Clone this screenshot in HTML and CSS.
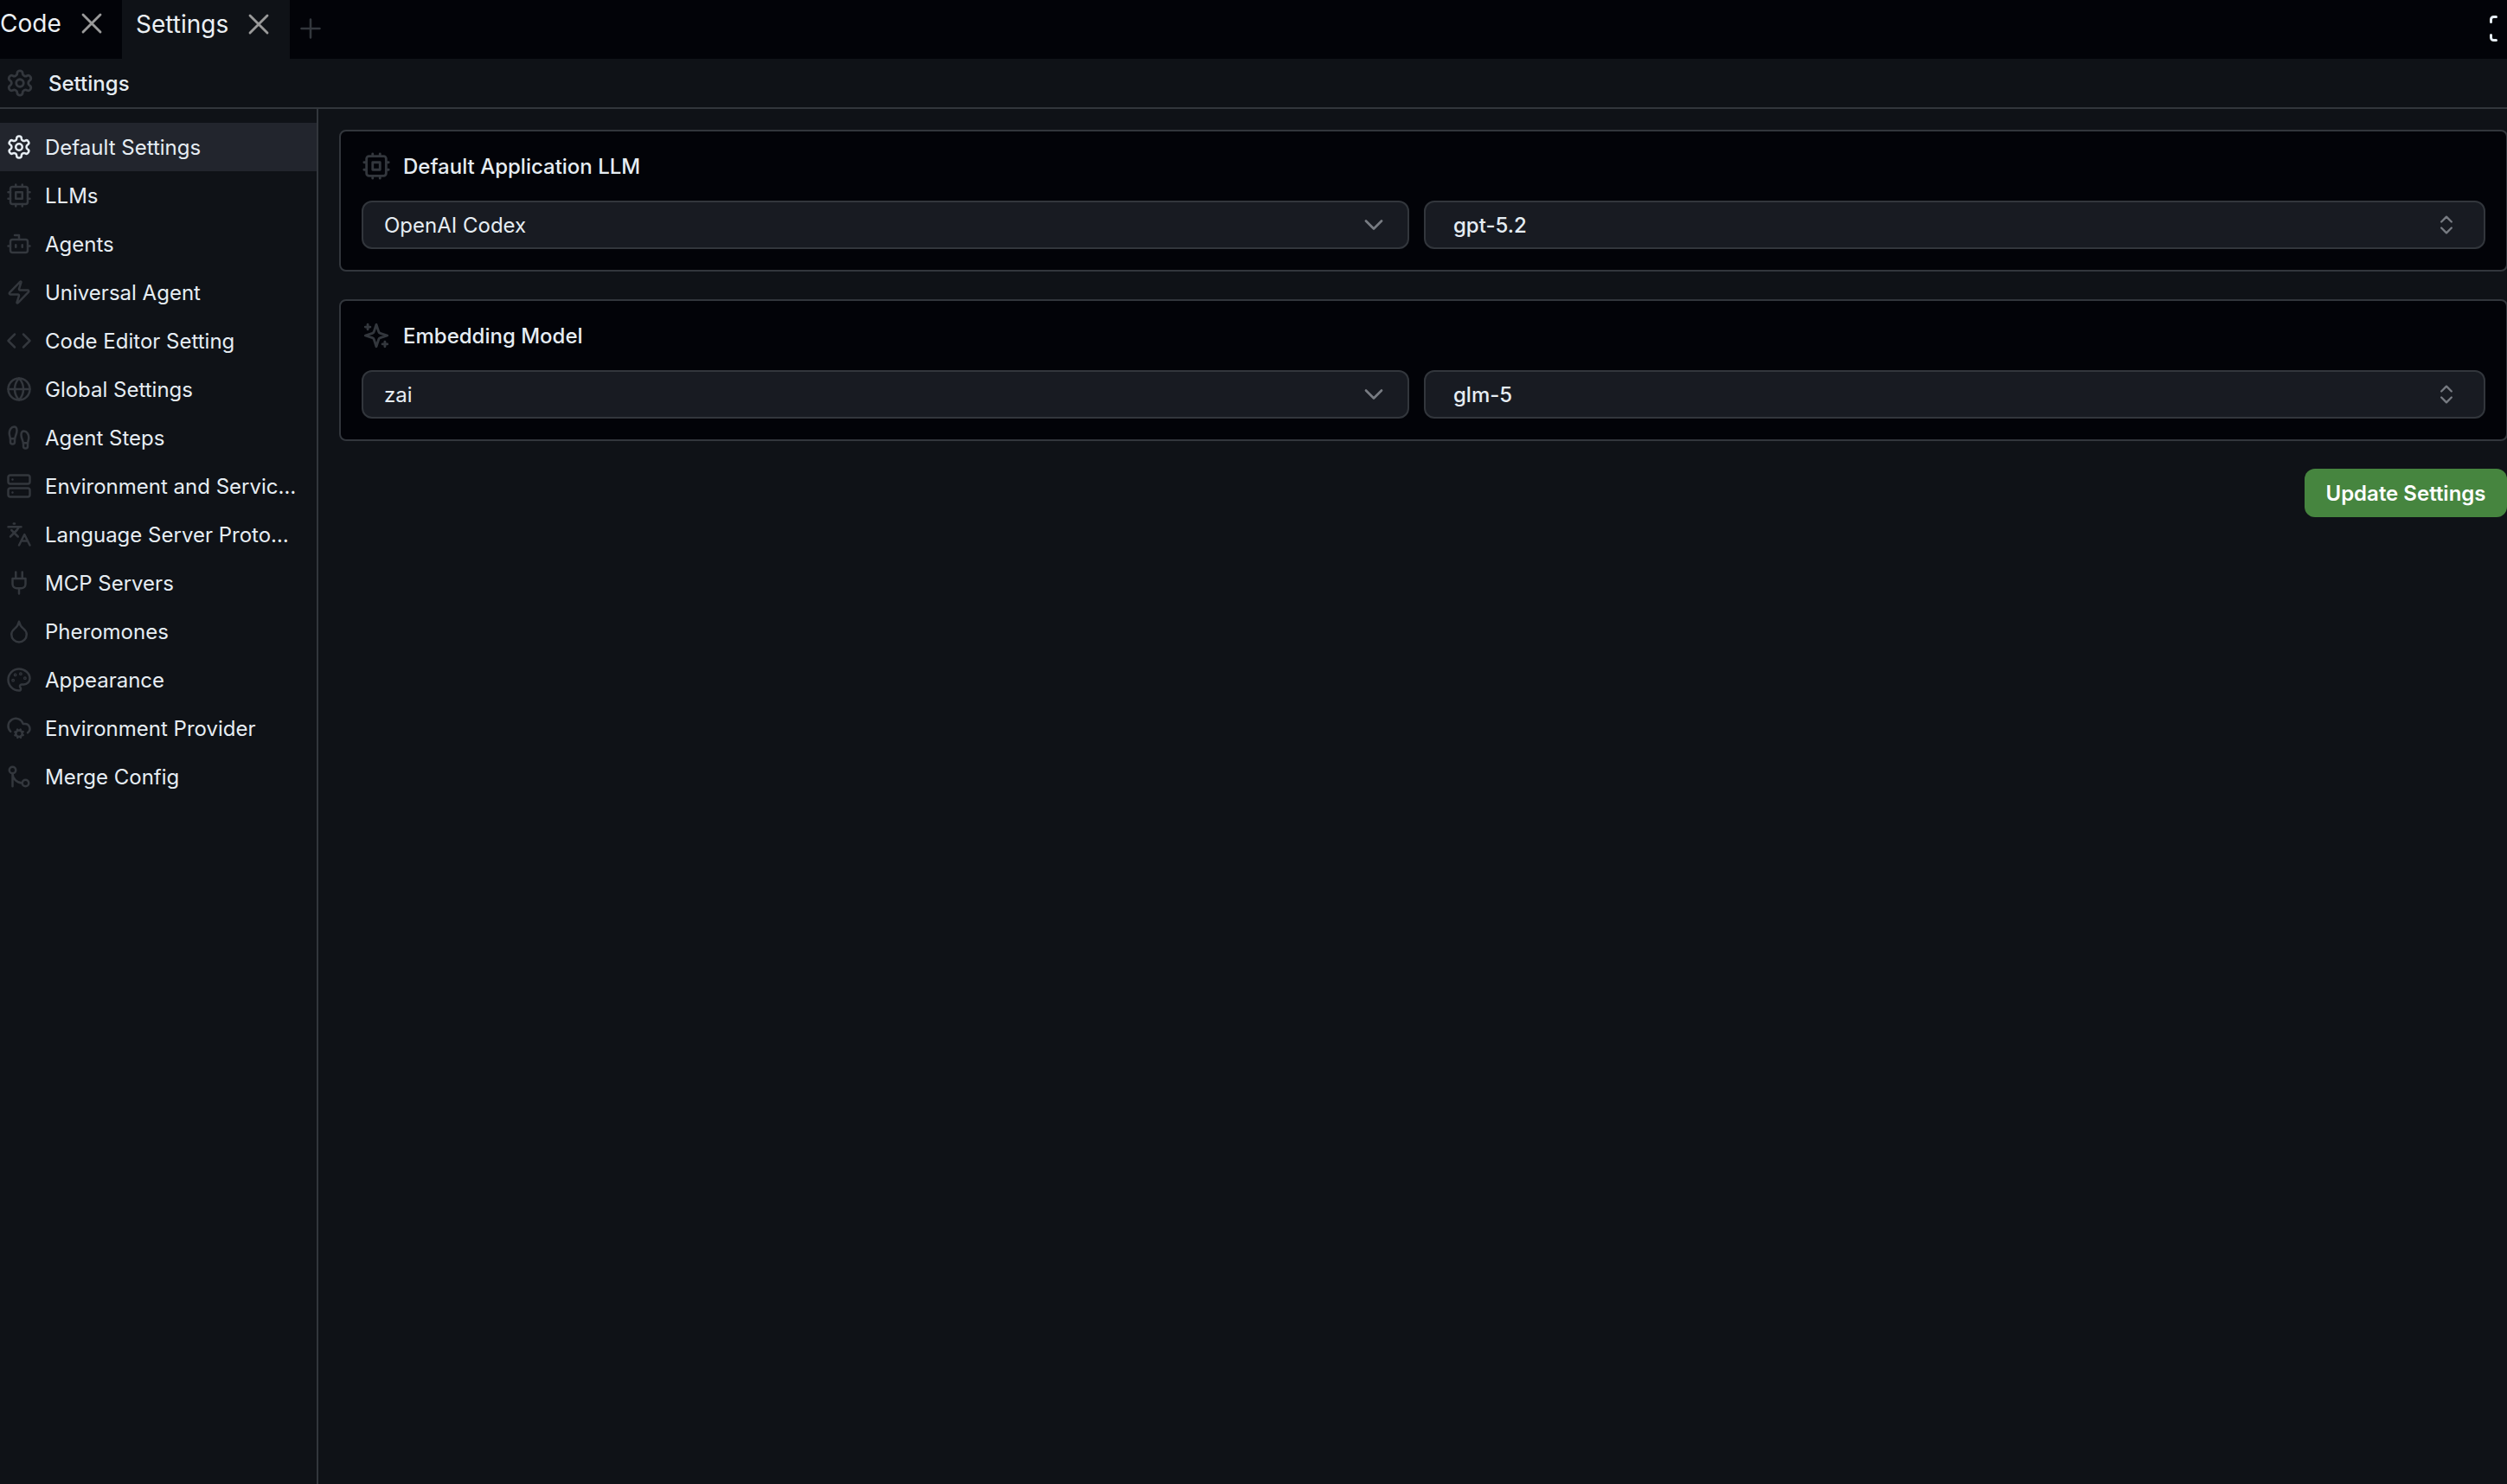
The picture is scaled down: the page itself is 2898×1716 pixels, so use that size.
FILE: index.html
```html
<!DOCTYPE html>
<html lang="en">
<head>
    <meta charset="UTF-8">
    <meta name="viewport" content="width=device-width, initial-scale=1.0">
    <title>Settings</title>
    <link rel="stylesheet" href="styles.css">
</head>
<body>
    <svg class="sprite" xmlns="http://www.w3.org/2000/svg">
        <symbol id="i-settings" viewBox="0 0 24 24"><path d="M12.22 2h-.44a2 2 0 0 0-2 2v.18a2 2 0 0 1-1 1.73l-.43.25a2 2 0 0 1-2 0l-.15-.08a2 2 0 0 0-2.73.73l-.22.38a2 2 0 0 0 .73 2.73l.15.1a2 2 0 0 1 1 1.72v.51a2 2 0 0 1-1 1.74l-.15.09a2 2 0 0 0-.73 2.73l.22.38a2 2 0 0 0 2.73.73l.15-.08a2 2 0 0 1 2 0l.43.25a2 2 0 0 1 1 1.73V20a2 2 0 0 0 2 2h.44a2 2 0 0 0 2-2v-.18a2 2 0 0 1 1-1.73l.43-.25a2 2 0 0 1 2 0l.15.08a2 2 0 0 0 2.73-.73l.22-.39a2 2 0 0 0-.73-2.73l-.15-.08a2 2 0 0 1-1-1.74v-.5a2 2 0 0 1 1-1.74l.15-.09a2 2 0 0 0 .73-2.73l-.22-.38a2 2 0 0 0-2.73-.73l-.15.08a2 2 0 0 1-2 0l-.43-.25a2 2 0 0 1-1-1.73V4a2 2 0 0 0-2-2z"/><circle cx="12" cy="12" r="3"/></symbol>
        <symbol id="i-cpu" viewBox="0 0 24 24"><rect x="4" y="4" width="16" height="16" rx="2"/><rect x="9" y="9" width="6" height="6"/><path d="M15 2v2M15 20v2M2 15h2M2 9h2M20 15h2M20 9h2M9 2v2M9 20v2"/></symbol>
        <symbol id="i-bot" viewBox="0 0 24 24"><path d="M12 8V4H8"/><rect x="4" y="8" width="16" height="12" rx="2"/><path d="M2 14h2M20 14h2M15 13v2M9 13v2"/></symbol>
        <symbol id="i-zap" viewBox="0 0 24 24"><path d="M4 14a1 1 0 0 1-.78-1.63l9.9-10.2a.5.5 0 0 1 .86.46l-1.92 6.02A1 1 0 0 0 13 10h7a1 1 0 0 1 .78 1.63l-9.9 10.2a.5.5 0 0 1-.86-.46l1.92-6.02A1 1 0 0 0 11 14z"/></symbol>
        <symbol id="i-code" viewBox="0 0 24 24"><path d="m16 18 6-6-6-6M8 6l-6 6 6 6"/></symbol>
        <symbol id="i-globe" viewBox="0 0 24 24"><circle cx="12" cy="12" r="10"/><path d="M12 2a14.5 14.5 0 0 0 0 20 14.5 14.5 0 0 0 0-20M2 12h20"/></symbol>
        <symbol id="i-steps" viewBox="0 0 24 24"><path d="M4 16v-2.38C4 11.5 2.97 10.5 3 8c.03-2.72 1.49-6 4.5-6C9.37 2 10 3.8 10 5.5c0 3.11-2 5.66-2 8.68V16a2 2 0 1 1-4 0Z"/><path d="M20 20v-2.38c0-2.12 1.03-3.12 1-5.62-.03-2.72-1.49-6-4.5-6C14.63 6 14 7.8 14 9.5c0 3.11 2 5.66 2 8.68V20a2 2 0 1 0 4 0Z"/><path d="M16 17h4M4 13h4"/></symbol>
        <symbol id="i-server" viewBox="0 0 24 24"><rect x="2" y="2" width="20" height="8" rx="2"/><rect x="2" y="14" width="20" height="8" rx="2"/><path d="M6 6h.01M6 18h.01"/></symbol>
        <symbol id="i-languages" viewBox="0 0 24 24"><path d="m5 8 6 6M4 14l6-6 2-3M2 5h12M7 2h1M22 22l-5-10-5 10M14 18h6"/></symbol>
        <symbol id="i-plug" viewBox="0 0 24 24"><path d="M12 22v-5M9 8V2M15 8V2M18 8v5a4 4 0 0 1-4 4h-4a4 4 0 0 1-4-4V8Z"/></symbol>
        <symbol id="i-droplet" viewBox="0 0 24 24"><path d="M12 22a7 7 0 0 0 7-7c0-2-1-3.9-3-5.5s-3.5-4-4-6.5c-.5 2.5-2 4.9-4 6.5C6 11.1 5 13 5 15a7 7 0 0 0 7 7z"/></symbol>
        <symbol id="i-palette" viewBox="0 0 24 24"><circle cx="13.5" cy="6.5" r=".5"/><circle cx="17.5" cy="10.5" r=".5"/><circle cx="8.5" cy="7.5" r=".5"/><circle cx="6.5" cy="12.5" r=".5"/><path d="M12 2C6.5 2 2 6.5 2 12s4.5 10 10 10c.926 0 1.648-.746 1.648-1.688 0-.437-.18-.835-.437-1.125-.29-.289-.438-.652-.438-1.125a1.64 1.64 0 0 1 1.668-1.668h1.996c3.051 0 5.555-2.503 5.555-5.554C21.965 6.012 17.461 2 12 2z"/></symbol>
        <symbol id="i-cloud-cog" viewBox="0 0 24 24"><circle cx="12" cy="17" r="3"/><path d="M4.2 15.1A7 7 0 1 1 15.71 8h1.79a4.5 4.5 0 0 1 2.5 8.2M15.7 18.4l-.9-.3M9.2 15.9l-.9-.3M10.6 20.7l.3-.9M13.1 14.2l.3-.9M13.6 20.7l-.4-1M10.8 14.3l-.4-1M8.3 18.6l1-.4M14.7 15.7l1-.4"/></symbol>
        <symbol id="i-merge" viewBox="0 0 24 24"><circle cx="18" cy="18" r="3"/><circle cx="6" cy="6" r="3"/><path d="M6 21V9a9 9 0 0 0 9 9"/></symbol>
        <symbol id="i-sparkles" viewBox="0 0 24 24"><path d="m12 3-1.9 5.8a2 2 0 0 1-1.3 1.3L3 12l5.8 1.9a2 2 0 0 1 1.3 1.3L12 21l1.9-5.8a2 2 0 0 1 1.3-1.3L21 12l-5.8-1.9a2 2 0 0 1-1.3-1.3L12 3Z"/><path d="M5 3v4M3 5h4M19 17v4M17 19h4"/></symbol>
        <symbol id="i-x" viewBox="0 0 24 24"><path d="M18 6 6 18M6 6l12 12"/></symbol>
        <symbol id="i-plus" viewBox="0 0 24 24"><path d="M5 12h14M12 5v14"/></symbol>
        <symbol id="i-down" viewBox="0 0 24 24"><path d="m6 9 6 6 6-6"/></symbol>
        <symbol id="i-updown" viewBox="0 0 24 24"><path d="m7 15 5 5 5-5M7 9l5-5 5 5"/></symbol>
        <symbol id="i-max" viewBox="0 0 24 24"><path d="M3 7V5a2 2 0 0 1 2-2h2M17 3h2a2 2 0 0 1 2 2v2M21 17v2a2 2 0 0 1-2 2h-2M7 21H5a2 2 0 0 1-2-2v-2"/></symbol>
    </svg>

    <div class="app">
        <div class="tabbar">
            <div class="tab tab-code">
                <span>Code</span>
                <svg class="icon icon-close"><use href="#i-x"/></svg>
            </div>
            <div class="tab tab-active">
                <span>Settings</span>
                <svg class="icon icon-close"><use href="#i-x"/></svg>
            </div>
            <svg class="icon icon-add"><use href="#i-plus"/></svg>
            <svg class="icon icon-max"><use href="#i-max"/></svg>
        </div>

        <div class="page-header">
            <svg class="icon icon-header"><use href="#i-settings"/></svg>
            <span>Settings</span>
        </div>

        <div class="layout">
            <nav class="sidebar">
                <a class="nav-item active"><svg class="icon"><use href="#i-settings"/></svg><span>Default Settings</span></a>
                <a class="nav-item"><svg class="icon"><use href="#i-cpu"/></svg><span>LLMs</span></a>
                <a class="nav-item"><svg class="icon"><use href="#i-bot"/></svg><span>Agents</span></a>
                <a class="nav-item"><svg class="icon"><use href="#i-zap"/></svg><span>Universal Agent</span></a>
                <a class="nav-item"><svg class="icon"><use href="#i-code"/></svg><span>Code Editor Setting</span></a>
                <a class="nav-item"><svg class="icon"><use href="#i-globe"/></svg><span>Global Settings</span></a>
                <a class="nav-item"><svg class="icon"><use href="#i-steps"/></svg><span>Agent Steps</span></a>
                <a class="nav-item"><svg class="icon"><use href="#i-server"/></svg><span>Environment and Servic…</span></a>
                <a class="nav-item"><svg class="icon"><use href="#i-languages"/></svg><span>Language Server Proto…</span></a>
                <a class="nav-item"><svg class="icon"><use href="#i-plug"/></svg><span>MCP Servers</span></a>
                <a class="nav-item"><svg class="icon"><use href="#i-droplet"/></svg><span>Pheromones</span></a>
                <a class="nav-item"><svg class="icon"><use href="#i-palette"/></svg><span>Appearance</span></a>
                <a class="nav-item"><svg class="icon"><use href="#i-cloud-cog"/></svg><span>Environment Provider</span></a>
                <a class="nav-item"><svg class="icon"><use href="#i-merge"/></svg><span>Merge Config</span></a>
            </nav>

            <main class="content">
                <section class="card">
                    <h2 class="card-title"><svg class="icon icon-card"><use href="#i-cpu"/></svg>Default Application LLM</h2>
                    <div class="select-row">
                        <div class="select select-provider"><span>OpenAI Codex</span><svg class="icon icon-chevron"><use href="#i-down"/></svg></div>
                        <div class="select select-model"><span>gpt-5.2</span><svg class="icon icon-updown"><use href="#i-updown"/></svg></div>
                    </div>
                </section>

                <section class="card">
                    <h2 class="card-title"><svg class="icon icon-card"><use href="#i-sparkles"/></svg>Embedding Model</h2>
                    <div class="select-row">
                        <div class="select select-provider"><span>zai</span><svg class="icon icon-chevron"><use href="#i-down"/></svg></div>
                        <div class="select select-model"><span>glm-5</span><svg class="icon icon-updown"><use href="#i-updown"/></svg></div>
                    </div>
                </section>

                <div class="actions">
                    <button class="btn-update">Update Settings</button>
                </div>
            </main>
        </div>
    </div>
</body>
</html>
```

FILE: styles.css
```css
* {
    box-sizing: border-box;
}

html,
body {
    margin: 0;
    height: 100%;
    overflow: hidden;
}

body {
    font-family: Inter, "Noto Sans", sans-serif;
    font-size: 24px;
    color: #e6edf3;
    background-color: #0f1217;
}

.sprite {
    display: none;
}

.icon {
    flex: none;
    width: 30px;
    height: 30px;
    fill: none;
    stroke: #33373d;
    stroke-width: 2;
    stroke-linecap: round;
    stroke-linejoin: round;
}

.app {
    display: flex;
    flex-direction: column;
    height: 100%;
}

/* tabs */
.tabbar {
    display: flex;
    align-items: stretch;
    flex: none;
    height: 68px;
    background-color: #020308;
}

.tab {
    display: flex;
    align-items: center;
    font-size: 28px;
    color: #ecf0f4;
}

.tab-code {
    width: 141px;
    padding-bottom: 15px;
}

.tab-code .icon-close {
    margin-left: 15px;
}

.tab-active {
    width: 194px;
    padding-left: 16px;
    padding-bottom: 12px;
    background-color: #0f1217;
}

.tab-active .icon-close {
    margin-left: 15px;
}

.icon-close {
    width: 40px;
    height: 40px;
    stroke: #9a9a9a;
    stroke-width: 1.7;
}

.icon-add {
    align-self: center;
    width: 36px;
    height: 36px;
    margin: 0 0 2px 6px;
    stroke-width: 1.7;
}

.icon-max {
    align-self: center;
    width: 36px;
    height: 36px;
    margin-left: auto;
    margin-right: -13px;
    margin-bottom: 2px;
    stroke: #e6edf3;
    stroke-width: 2;
}

/* page header */
.page-header {
    display: flex;
    align-items: center;
    flex: none;
    gap: 16px;
    height: 58px;
    padding-left: 6px;
    font-weight: 500;
    border-bottom: 2px solid #32363c;
}

.icon-header {
    width: 34px;
    height: 34px;
}

.layout {
    display: flex;
    flex: 1;
    min-height: 0;
}

/* sidebar */
.sidebar {
    flex: none;
    width: 368px;
    padding-top: 16px;
    border-right: 2px solid #32363c;
}

.nav-item {
    display: flex;
    align-items: center;
    gap: 15px;
    height: 56px;
    padding-left: 7px;
    white-space: nowrap;
}

.nav-item.active {
    background-color: #22252d;
}

.nav-item.active .icon {
    stroke: #e6edf3;
}

/* cards */
.content {
    flex: 1;
    display: flex;
    flex-direction: column;
    gap: 32px;
    padding: 24px 0 0 24px;
}

.card {
    height: 164px;
    margin-right: -1px;
    padding: 22px 24px 0 24px;
    background-color: #020308;
    border: 2px solid #32363c;
    border-radius: 8px;
}

.card-title {
    display: flex;
    align-items: center;
    gap: 14px;
    height: 36px;
    margin: 0 0 22px;
    font-size: 24px;
    font-weight: 500;
}

.icon-card {
    width: 34px;
    height: 34px;
}

.select-row {
    display: grid;
    grid-template-columns: 1211fr 1227fr;
    gap: 17px;
}

.select {
    display: flex;
    align-items: center;
    justify-content: space-between;
    height: 56px;
    background-color: #181b22;
    border: 2px solid #32363c;
    border-radius: 12px;
}

.select-provider {
    padding: 0 21px 0 24px;
}

.select-model {
    padding: 0 29px 0 32px;
    font-weight: 500;
}

.icon-chevron {
    width: 36px;
    height: 36px;
    stroke: #777b82;
    stroke-width: 1.8;
}

.icon-updown {
    width: 28px;
    height: 28px;
    stroke: #777b82;
    stroke-width: 2;
}

.actions {
    display: flex;
    justify-content: flex-end;
}

.btn-update {
    width: 234px;
    height: 56px;
    padding: 0;
    font-family: inherit;
    font-size: 24px;
    font-weight: 600;
    color: #fff;
    background-color: #46853f;
    border: none;
    border-radius: 12px;
}
```
